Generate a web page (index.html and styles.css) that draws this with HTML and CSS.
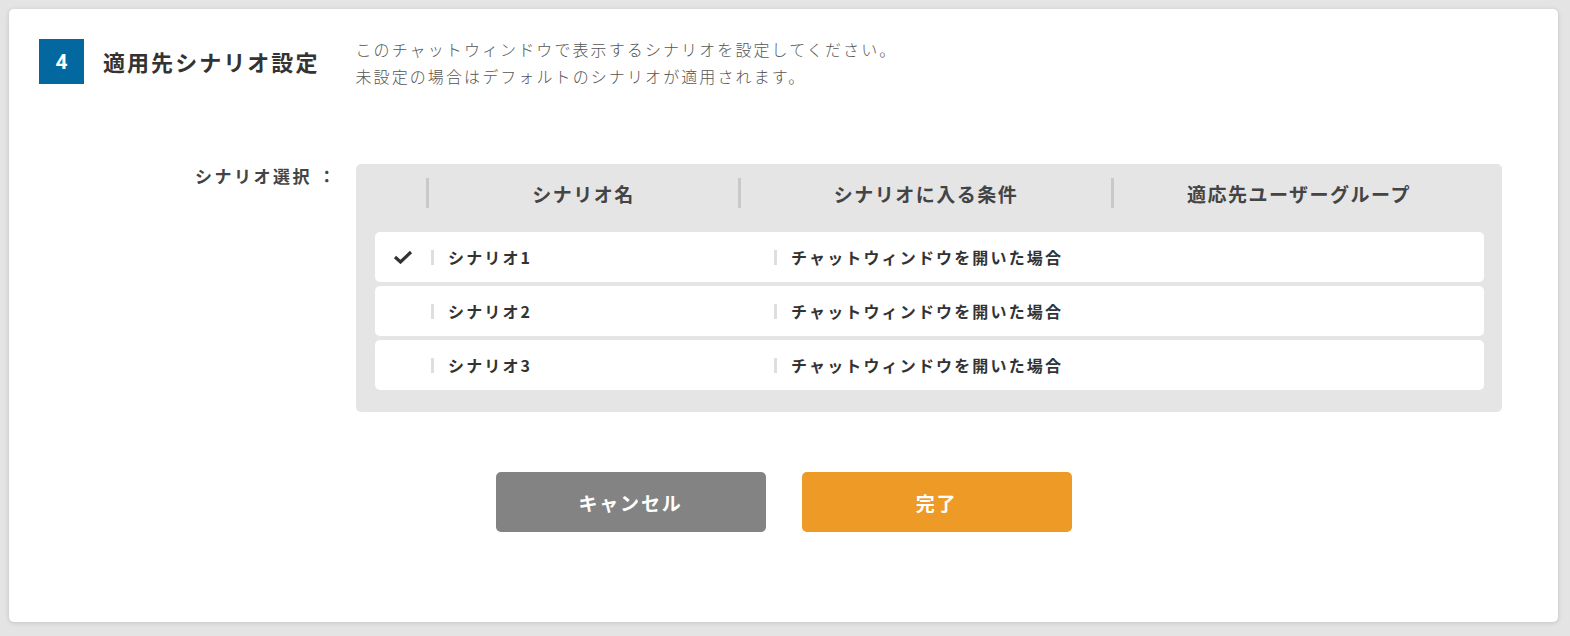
FILE: index.html
```html
<!DOCTYPE html>
<html lang="ja">
<head>
  <meta charset="UTF-8">
  <title>適用先シナリオ設定</title>
  <link rel="stylesheet" href="styles.css">
</head>
<body>

  <div class="card">
    <div class="step-header">
      <div class="step-num">4</div>
      <h2 class="step-title">適用先シナリオ設定</h2>
      <p class="step-desc">このチャットウィンドウで表示するシナリオを設定してください。<br>未設定の場合はデフォルトのシナリオが適用されます。</p>
    </div>

    <div class="form-row">
      <div class="form-label">シナリオ選択 ：</div>
      <div class="scenario-table">
        <div class="table-head">
          <div class="head-check"></div>
          <div class="head-cell col-name">シナリオ名</div>
          <div class="head-cell col-cond">シナリオに入る条件</div>
          <div class="head-cell col-group">適応先ユーザーグループ</div>
        </div>

        <div class="table-rows">
          <div class="row">
            <div class="row-check">
              <svg width="20" height="14" viewBox="0 0 20 14"><path d="M2 7 L7.5 12 L18 2" fill="none" stroke="#333" stroke-width="3.2"/></svg>
            </div>
            <div class="row-cell row-name">シナリオ1</div>
            <div class="row-cell row-cond">チャットウィンドウを開いた場合</div>
          </div>
          <div class="row">
            <div class="row-check"></div>
            <div class="row-cell row-name">シナリオ2</div>
            <div class="row-cell row-cond">チャットウィンドウを開いた場合</div>
          </div>
          <div class="row">
            <div class="row-check"></div>
            <div class="row-cell row-name">シナリオ3</div>
            <div class="row-cell row-cond">チャットウィンドウを開いた場合</div>
          </div>
        </div>
      </div>
    </div>

    <div class="buttons">
      <button type="button" class="btn btn-cancel">キャンセル</button>
      <button type="button" class="btn btn-done">完了</button>
    </div>
  </div>

</body>
</html>
```

FILE: styles.css
```css
* {
  box-sizing: border-box;
}

body {
  margin: 0;
  padding: 9px;
  background-color: #e4e4e4;
  font-family: "Noto Sans CJK JP", "Noto Sans", sans-serif;
  color: #333;
}

.card {
  width: 1549px;
  height: 613px;
  background-color: #ffffff;
  border-radius: 5px;
  box-shadow: 0 1px 5px rgba(0, 0, 0, 0.15);
  padding: 30px 30px 0 30px;
}

.step-header {
  display: flex;
  align-items: flex-start;
}

.step-num {
  width: 45px;
  height: 45px;
  background-color: #03689f;
  color: #fff;
  font-family: "Roboto", "Noto Sans", sans-serif;
  font-size: 21px;
  font-weight: 700;
  display: flex;
  align-items: center;
  justify-content: center;
}

.step-title {
  margin: 0 0 0 19px;
  font-size: 22px;
  font-weight: 700;
  letter-spacing: 2.05px;
  line-height: 45px;
  color: #333;
}

.step-desc {
  margin: -3px 0 0 36px;
  font-size: 16px;
  font-weight: 300;
  letter-spacing: 2.1px;
  line-height: 27px;
  color: #555;
}

.form-row {
  display: flex;
  align-items: flex-start;
  margin-top: 74px;
}

.form-label {
  width: 161px;
  margin-left: 156px;
  font-size: 17px;
  font-weight: 700;
  letter-spacing: 2.5px;
  line-height: 24px;
  color: #444;
}

.scenario-table {
  flex: 1;
  margin-right: 26px;
  background-color: #e5e5e5;
  border-radius: 5px;
  padding: 14px 18px 22px 19px;
}

.table-head {
  display: flex;
  height: 30px;
  align-items: center;
}

.head-check {
  width: 51px;
}

.head-cell {
  height: 30px;
  border-left: 3px solid #c9c9c9;
  display: flex;
  align-items: center;
  justify-content: center;
  font-size: 19px;
  font-weight: 700;
  letter-spacing: 1.5px;
  color: #444;
}

.col-name {
  width: 312px;
}

.col-cond {
  width: 373px;
}

.col-group {
  flex: 1;
}

.table-rows {
  margin-top: 24px;
  display: flex;
  flex-direction: column;
  gap: 4px;
}

.row {
  display: flex;
  align-items: center;
  height: 50px;
  background-color: #fff;
  border-radius: 5px;
}

.row-check {
  width: 56px;
  padding-left: 18px;
  display: flex;
  align-items: center;
}

.row-cell {
  position: relative;
  padding-left: 17px;
  font-size: 16px;
  font-weight: 700;
  letter-spacing: 2.15px;
  color: #333;
}

.row-cell::before {
  content: "";
  position: absolute;
  left: 0;
  top: 50%;
  margin-top: -7px;
  width: 3px;
  height: 15px;
  background-color: #dedede;
}

.row-name {
  width: 343px;
}

.buttons {
  display: flex;
  justify-content: center;
  gap: 36px;
  margin-top: 60px;
}

.btn {
  width: 270px;
  height: 60px;
  border: none;
  border-radius: 5px;
  color: #fff;
  font-family: "Noto Sans CJK JP", "Noto Sans", sans-serif;
  font-size: 19px;
  font-weight: 700;
  letter-spacing: 1.8px;
  cursor: pointer;
}

.btn-cancel {
  background-color: #838383;
}

.btn-done {
  background-color: #ee9a26;
}
```
